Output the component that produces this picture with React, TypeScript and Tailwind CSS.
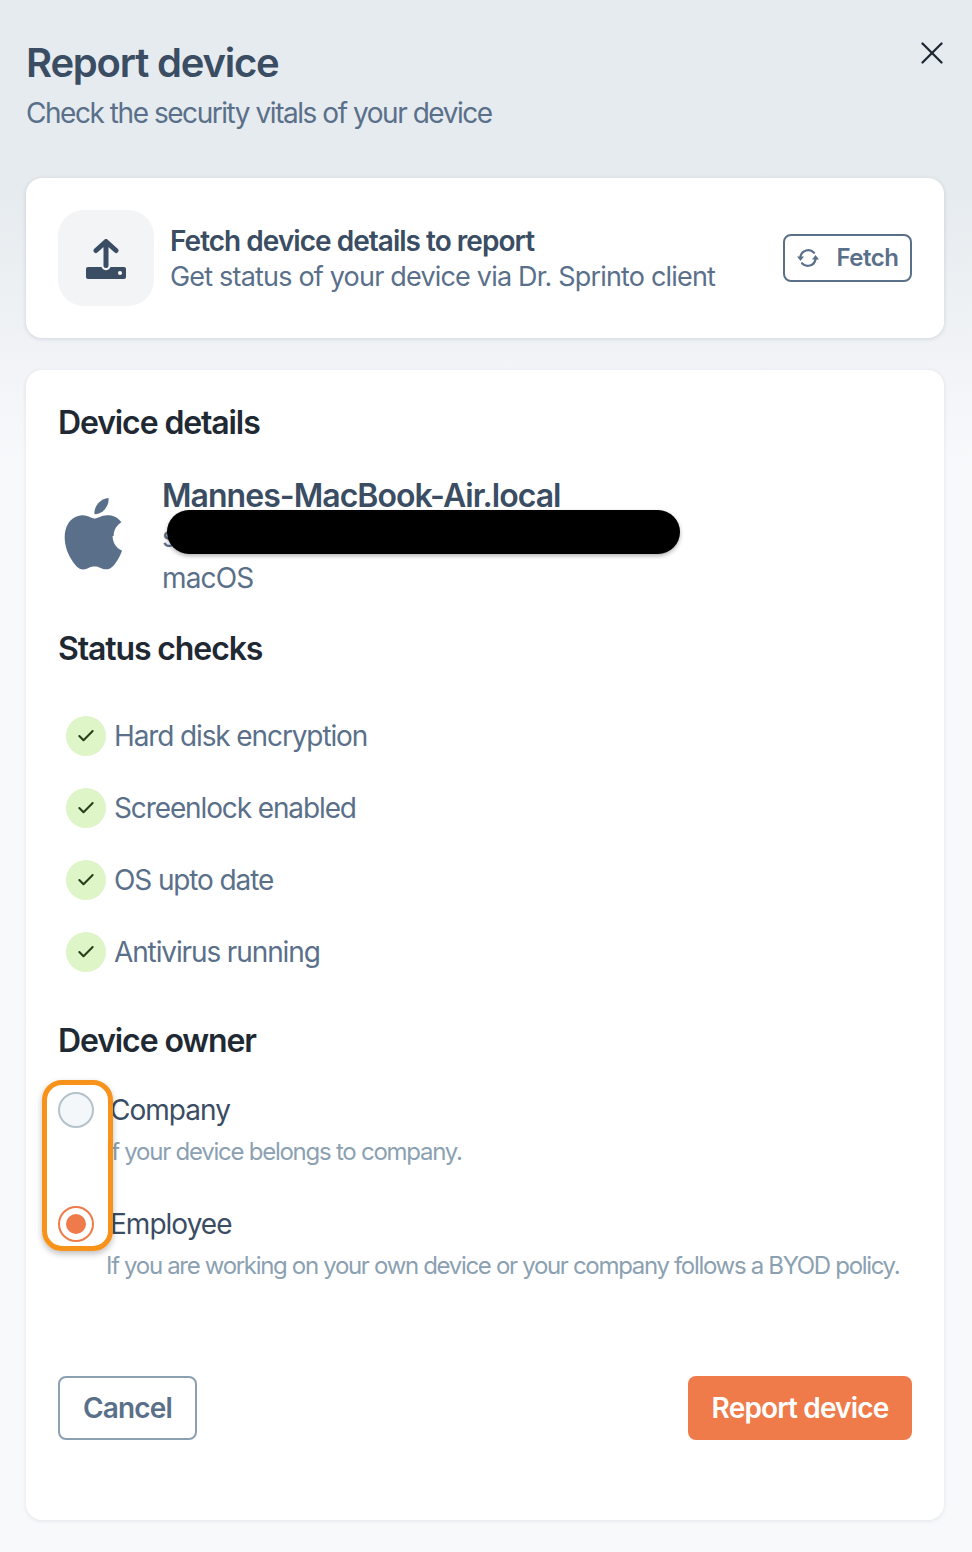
import { X, Check } from 'lucide-react';

const checks = ['Hard disk encryption', 'Screenlock enabled', 'OS upto date', 'Antivirus running'];

function UploadIcon() {
  return (
    <svg className="mt-[2px]" width="40" height="40" viewBox="0 0 40 40" fill="none">
      <path d="M0 30a2 2 0 0 1 2-2h13.500c.6 2 2.300 3.200 4.500 3.200s3.900-1.200 4.500-3.200H38a2 2 0 0 1 2 2v8a2 2 0 0 1-2 2H2a2 2 0 0 1-2-2z" fill="#3a4d63" />
      <circle cx="34" cy="34" r="2" fill="#fff" />
      <path d="M20 26.500V3M10 11.500 20 2.500l10 9" stroke="#3a4d63" strokeWidth="5" strokeLinecap="round" strokeLinejoin="round" />
    </svg>
  );
}

function SyncIcon() {
  return (
    <svg width="24" height="24" viewBox="0 0 24 24" fill="none">
      <path d="M4.500 10.500A7.800 7.800 0 0 1 18 6.800" stroke="#5a708a" strokeWidth="2.200" strokeLinecap="round" />
      <path d="M19.500 13.500A7.800 7.800 0 0 1 6 17.200" stroke="#5a708a" strokeWidth="2.200" strokeLinecap="round" />
      <path d="M1 10.500h7l-3.500 4.500z" fill="#5a708a" />
      <path d="M23 13.500h-7l3.500-4.500z" fill="#5a708a" />
    </svg>
  );
}

function AppleIcon() {
  return (
    <svg width="61" height="74" viewBox="0 3 56 67.500">
      <path
        d="M46.500 38.500c-.1-8.300 6.800-12.300 7.100-12.500-3.900-5.700-9.900-6.500-12.100-6.500-5.100-.5-10 3-12.600 3-2.600 0-6.600-3-10.900-2.900-5.600.1-10.800 3.300-13.600 8.300C-1.500 38.500 2.700 53 8.300 61c2.700 4 6 8.400 10.200 8.300 4.100-.2 5.600-2.700 10.600-2.700s6.300 2.700 10.700 2.600c4.400-.1 7.200-4 9.900-8 3.100-4.600 4.400-9 4.500-9.300-.1 0-8.600-3.300-8.700-13.400z"
        fill="#5a708a"
      />
      <path d="M38.500 14c2.200-2.800 3.800-6.500 3.300-10.300-3.200.1-7.200 2.200-9.500 4.900-2 2.400-3.900 6.200-3.400 9.900 3.600.3 7.300-1.800 9.600-4.500z" fill="#5a708a" />
    </svg>
  );
}

export default function App() {
  return (
    <div className="relative h-[1552px] w-[972px] overflow-hidden bg-gradient-to-b from-[#e6ebef] from-[12%] to-[#f8f9fb] to-[30%] pr-[28px] pl-[26px] font-['Inter',sans-serif]">
      {/* Header */}
      <header className="flex h-[178px] flex-col pt-[36px]">
        <h1 className="text-[40px] leading-[54px] font-semibold tracking-[-0.03em] text-[#3a4d63]">Report device</h1>
        <p className="mt-[2px] text-[28px] leading-[42px] tracking-[-0.052em] text-[#5a708a]">Check the security vitals of your device</p>
      </header>
      <button className="absolute top-[34px] right-[21px] text-[#1f2933]">
        <X size={38} strokeWidth={1.5} />
      </button>

      {/* Fetch card */}
      <section className="flex h-[160px] items-center rounded-[16px] bg-white px-[32px] shadow-[0_1px_4px_rgba(58,77,99,0.18)]">
        <div className="flex h-[96px] w-[96px] items-center justify-center rounded-[26px] bg-[#f2f4f6]">
          <UploadIcon />
        </div>
        <div className="ml-[16px] flex-1 pt-[2px]">
          <div className="text-[28px] leading-[36px] font-semibold tracking-[-0.035em] text-[#3a4d63]">Fetch device details to report</div>
          <div className="text-[27px] leading-[36px] tracking-[-0.03em] text-[#5a708a]">Get status of your device via Dr. Sprinto client</div>
        </div>
        <button className="flex h-[48px] w-[129px] items-center justify-center gap-[16px] rounded-[8px] border-2 border-[#5a708a] text-[24px] font-semibold tracking-[-0.02em] text-[#5a708a]">
          <SyncIcon />
          Fetch
        </button>
      </section>

      {/* Details card */}
      <section className="relative mt-[32px] h-[1150px] rounded-[16px] bg-white px-[32px] pt-[32px] shadow-[0_1px_4px_rgba(58,77,99,0.12)]">
        <h2 className="text-[32px] leading-[42px] font-semibold tracking-[-0.035em] text-[#1f2933]">Device details</h2>

        <div className="mt-[30px] flex">
          <div className="mt-[23px] w-[104px] pl-[5px]">
            <AppleIcon />
          </div>
          <div>
            <div className="text-[32px] leading-[44px] font-semibold tracking-[-0.03em] text-[#3a4d63]">Mannes-MacBook-Air.local</div>
            <div className="text-[28px] leading-[38px] text-[#5a708a]">s</div>
            <div className="text-[28px] leading-[44px] tracking-[-0.03em] text-[#5a708a]">macOS</div>
          </div>
        </div>
        {/* Redaction */}
        <div className="absolute top-[140px] left-[141px] h-[44px] w-[513px] rounded-full bg-black shadow-[0_2px_4px_rgba(0,0,0,0.3)]" />

        <h2 className="mt-[28px] text-[32px] leading-[42px] font-semibold tracking-[-0.035em] text-[#1f2933]">Status checks</h2>
        <ul className="mt-[46px] flex flex-col gap-[32px] pl-[8px]">
          {checks.map((c) => (
            <li key={c} className="flex h-[40px] items-center gap-[8px]">
              <span className="flex h-[40px] w-[40px] items-center justify-center rounded-full bg-[#def5c8] text-[#27401c]">
                <Check size={20} strokeWidth={2.5} />
              </span>
              <span className="text-[28px] tracking-[-0.04em] text-[#5a708a]">{c}</span>
            </li>
          ))}
        </ul>

        <h2 className="mt-[48px] text-[32px] leading-[42px] font-semibold tracking-[-0.035em] text-[#1f2933]">Device owner</h2>

        <div className="mt-[30px] flex flex-col gap-[34px]">
          <label className="flex">
            <span className="h-[36px] w-[36px] shrink-0 rounded-full border-2 border-[#b4c2cc] bg-[#f4f7f9]" />
            <div className="ml-[12px] -mt-[2px]">
              <div className="ml-[4px] text-[28px] leading-[40px] tracking-[-0.035em] text-[#3a4d63]">Company</div>
              <div className="mt-[2px] text-[24px] leading-[40px] tracking-[-0.052em] text-[#8ba1b2]">If your device belongs to company.</div>
            </div>
          </label>
          <label className="flex">
            <span className="flex h-[36px] w-[36px] shrink-0 items-center justify-center rounded-full border-2 border-[#ef7b4b] bg-white">
              <span className="h-[20px] w-[20px] rounded-full bg-[#ef7b4b]" />
            </span>
            <div className="ml-[12px] -mt-[2px]">
              <div className="ml-[4px] text-[28px] leading-[40px] tracking-[-0.035em] text-[#3a4d63]">Employee</div>
              <div className="mt-[2px] text-[24px] leading-[40px] tracking-[-0.055em] whitespace-nowrap text-[#8ba1b2]">If you are working on your own device or your company follows a BYOD policy.</div>
            </div>
          </label>
        </div>
        {/* Annotation highlight */}
        <div className="absolute top-[710px] left-[16px] h-[171px] w-[71px] rounded-[20px] border-[5px] border-[#f7931a] shadow-[0_3px_6px_rgba(0,0,0,0.25)]" />

        <div className="absolute right-[32px] bottom-[80px] left-[32px] flex justify-between">
          <button className="h-[64px] w-[139px] rounded-[8px] border-2 border-[#8ba1b2] text-[28px] font-semibold tracking-[-0.03em] text-[#5a708a]">Cancel</button>
          <button className="h-[64px] w-[224px] rounded-[8px] bg-[#ef7b4b] text-[28px] font-semibold tracking-[-0.03em] text-white">Report device</button>
        </div>
      </section>
    </div>
  );
}
